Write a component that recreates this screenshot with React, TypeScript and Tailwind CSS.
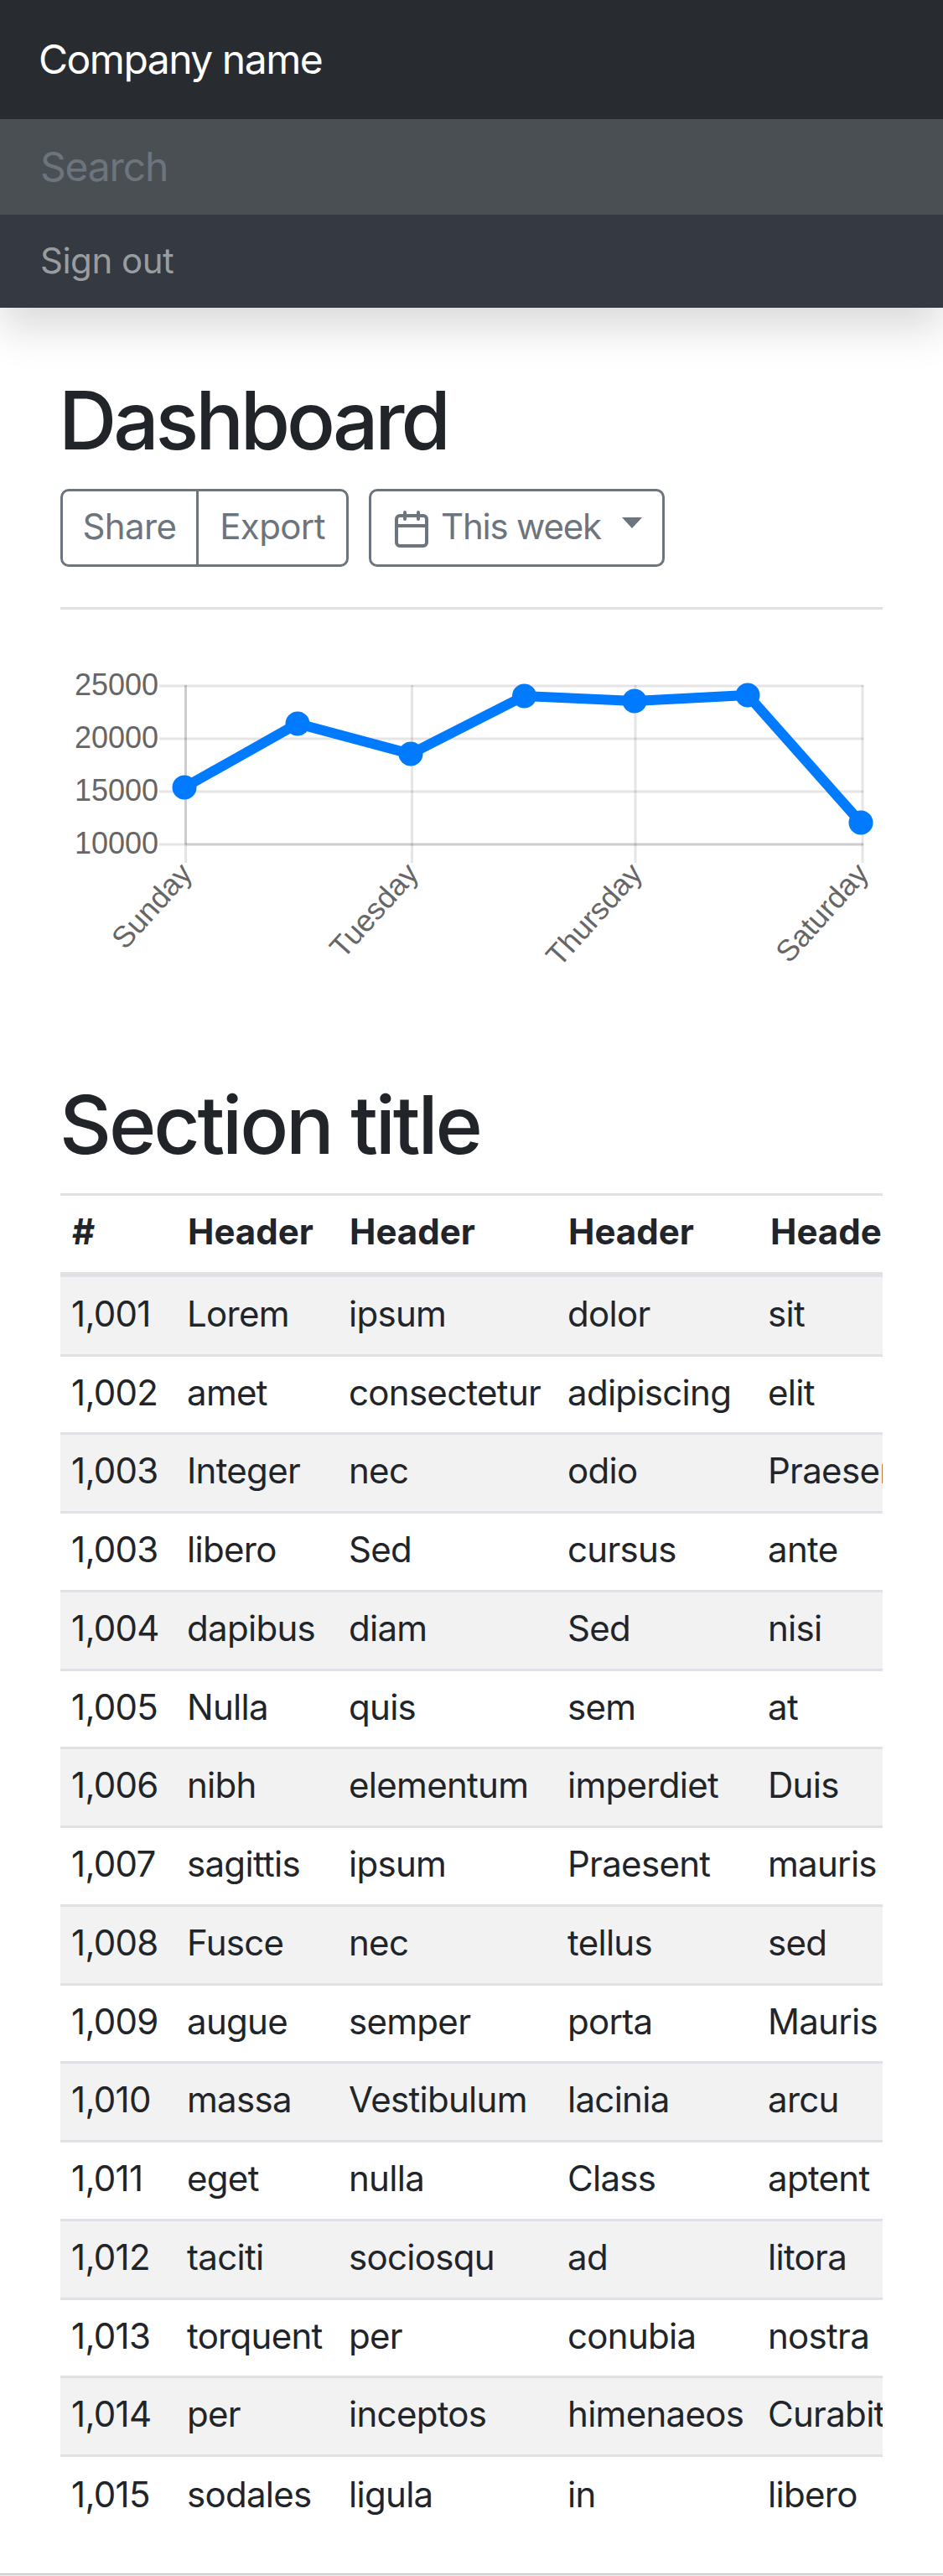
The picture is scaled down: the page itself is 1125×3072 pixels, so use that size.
const ROWS = [
  ["1,001", "Lorem", "ipsum", "dolor", "sit"],
  ["1,002", "amet", "consectetur", "adipiscing", "elit"],
  ["1,003", "Integer", "nec", "odio", "Praesent"],
  ["1,003", "libero", "Sed", "cursus", "ante"],
  ["1,004", "dapibus", "diam", "Sed", "nisi"],
  ["1,005", "Nulla", "quis", "sem", "at"],
  ["1,006", "nibh", "elementum", "imperdiet", "Duis"],
  ["1,007", "sagittis", "ipsum", "Praesent", "mauris"],
  ["1,008", "Fusce", "nec", "tellus", "sed"],
  ["1,009", "augue", "semper", "porta", "Mauris"],
  ["1,010", "massa", "Vestibulum", "lacinia", "arcu"],
  ["1,011", "eget", "nulla", "Class", "aptent"],
  ["1,012", "taciti", "sociosqu", "ad", "litora"],
  ["1,013", "torquent", "per", "conubia", "nostra"],
  ["1,014", "per", "inceptos", "himenaeos", "Curabitur"],
  ["1,015", "sodales", "ligula", "in", "libero"],
];

const POINTS = [
  [220, 939],
  [355, 863],
  [490, 899],
  [625.5, 830],
  [757, 836],
  [892, 829],
  [1027, 981],
];

const Y_TICKS = [
  { label: "25000", y: 818 },
  { label: "20000", y: 881 },
  { label: "15000", y: 944 },
  { label: "10000", y: 1007 },
];

const X_LABELS = [
  { label: "Sunday", x: 231 },
  { label: "Tuesday", x: 501 },
  { label: "Thursday", x: 768 },
  { label: "Saturday", x: 1038 },
];

const GRID_X = [221.5, 491.5, 758, 1029];

function Chart() {
  return (
    <svg viewBox="72 727 981 557" className="block w-[981px] h-[557px]">
      <g stroke="#000000" strokeOpacity="0.1" strokeWidth="3">
        {Y_TICKS.map((t) => (
          <line key={t.label} x1="190" x2="1030" y1={t.y} y2={t.y} />
        ))}
        {GRID_X.map((x) => (
          <line key={x} x1={x} x2={x} y1="817" y2="1029" />
        ))}
        {/* axis borders sit on top of the first grid lines */}
        <line x1="221.5" x2="221.5" y1="817" y2="1007" />
        <line x1="221.5" x2="1030" y1="1007" y2="1007" />
      </g>
      {Y_TICKS.map((t) => (
        <text key={t.label} x="189" y={t.y + 11} textAnchor="end" fill="#666666" fontSize="36" fontFamily="'Liberation Sans', sans-serif">
          {t.label}
        </text>
      ))}
      {X_LABELS.map((t) => (
        <text
          key={t.label}
          transform={`translate(${t.x} 1043) rotate(-48)`}
          textAnchor="end"
          fill="#666666"
          fontSize="36"
          fontFamily="'Liberation Sans', sans-serif"
        >
          {t.label}
        </text>
      ))}
      <polyline points={POINTS.map((p) => p.join(",")).join(" ")} fill="none" stroke="#007bff" strokeWidth="12" strokeLinejoin="miter" />
      {POINTS.map((p) => (
        <circle key={p[0]} cx={p[0]} cy={p[1]} r="14.5" fill="#007bff" />
      ))}
    </svg>
  );
}

function CalendarIcon() {
  return (
    <svg viewBox="0 0 24 24" fill="none" stroke="currentColor" strokeWidth="2" strokeLinecap="round" strokeLinejoin="round" className="w-12 h-12 shrink-0 mt-[3px]">
      <rect x="3" y="4" width="18" height="18" rx="2" ry="2" />
      <line x1="16" y1="2" x2="16" y2="6" />
      <line x1="8" y1="2" x2="8" y2="6" />
      <line x1="3" y1="10" x2="21" y2="10" />
    </svg>
  );
}

function rowHeight(r: number) {
  if (r === 0) return "h-[95px]";
  return r % 4 === 1 ? "h-[93px]" : "h-[94px]";
}

export default function App() {
  return (
    <div className="flex flex-col w-[1125px] h-[3072px] overflow-hidden bg-white text-[#212529] font-['Inter','Liberation_Sans',sans-serif]">
      <header className="relative z-10 bg-[#353941] shadow-[0_24px_48px_rgba(0,0,0,0.15)]">
        <div className="h-[142px] flex items-center pl-[46px] bg-[#282b30] text-white text-[48px] tracking-[-1.5px]">Company name</div>
        <div className="h-[114px] flex items-center pl-12 bg-[#4a4f53] text-[#6c757d] text-[48px] tracking-[-1.2px]">Search</div>
        <div className="h-[111px] flex items-center pl-12 pb-0.5 text-[#9a9da0] text-[42px] tracking-[-0.5px]">Sign out</div>
      </header>

      <main className="flex-1 px-[72px] pt-[77px]">
        <h1 className="-ml-0.5 text-[96px] leading-[115px] font-medium mb-6 tracking-[-4.1px]">Dashboard</h1>
        <div className="flex gap-6 pb-12 border-b-[3px] border-[#dfe1e6] text-[#6c757d] text-[42px] leading-[63px] tracking-[-0.6px]">
          <div className="flex h-[93px] w-[344px] border-[3px] border-[#6c757d] rounded-[10px]">
            <button className="w-[162px] pb-1 border-r-[3px] border-[#6c757d]">Share</button>
            <button className="flex-1 pb-1">Export</button>
          </div>
          <button className="flex items-center w-[353px] h-[93px] px-6 border-[3px] border-[#6c757d] rounded-[10px]">
            <CalendarIcon />
            <span className="ml-[11px] pb-1 tracking-[-1.2px]">This week</span>
            <span className="ml-auto border-x-[12px] border-x-transparent border-t-[13px] border-t-[#6c757d] -translate-y-1.5" />
          </button>
        </div>

        <Chart />

        <h2 className="-ml-px text-[96px] leading-[115px] font-medium mb-6 tracking-[-3.1px]">Section title</h2>
        <div className="overflow-hidden w-[981px]">
          <table className="table-fixed w-[1200px] border-separate border-spacing-0 text-[42px]">
            <thead>
              <tr className="font-bold">
                {["#", "Header", "Header", "Header", "Header"].map((h, i) => (
                  <th
                    key={i}
                    className={`h-[100px] pb-1.5 text-left border-t-[3px] border-b-[6px] border-[#dfe1e6] ${i === 4 ? "pl-4" : "pl-3.5"} ${
                      i === 0 ? "w-[138px]" : i === 1 ? "w-[193px]" : i === 2 ? "w-[261px]" : i === 3 ? "w-[239px]" : ""
                    }`}
                  >
                    {h}
                  </th>
                ))}
              </tr>
            </thead>
            <tbody className="tracking-[-0.7px]">
              {ROWS.map((row, r) => (
                <tr key={r} className={r % 2 === 0 ? "bg-[#f2f2f3]" : ""}>
                  {row.map((cell, c) => (
                    <td
                      key={c}
                      className={`pl-[13px] pb-1.5 whitespace-nowrap overflow-hidden ${rowHeight(r)} ${
                        r < 15 ? "border-b-[3px] border-[#dfe1e6]" : ""
                      }`}
                    >
                      {cell}
                    </td>
                  ))}
                </tr>
              ))}
            </tbody>
          </table>
        </div>
      </main>

      <footer className="h-[3px] border-t border-[#b9b9b9] bg-[#e6e6e6]" />
    </div>
  );
}
